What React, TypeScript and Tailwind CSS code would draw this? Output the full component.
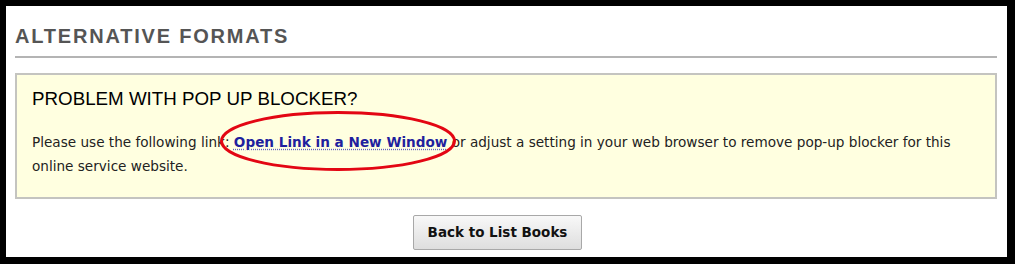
export default function App() {
  return (
    <div className="w-[1015px] h-[264px] bg-black pt-[6px] pl-[6px] pr-[8px] pb-[7px]">
      <div className="h-full bg-white pl-[9px] pr-[10px] pt-[18px]">
        <h2 className="font-['Liberation_Sans',Arial,sans-serif] font-bold text-[20px] leading-[24px] tracking-[1.8px] text-[#555] pb-[8px] border-b-2 border-[#b4b4b4]">
          ALTERNATIVE FORMATS
        </h2>
        <div className="relative mt-[15px] h-[126px] border-2 border-[#c4c4c0] bg-[#ffffe0] pl-[15px] pt-[13px]">
          <h3 className="font-['Liberation_Sans',Arial,sans-serif] text-[18.75px] leading-[22px] text-black">
            PROBLEM WITH POP UP BLOCKER?
          </h3>
          <p className="mt-[20px] font-['DejaVu_Sans',Verdana,sans-serif] text-[13.6px] leading-[24px] text-[#222]">
            Please use the following link:{' '}
            <a className="font-bold text-[#1f1f9e] underline decoration-dotted decoration-[#6060c0] underline-offset-2">
              Open Link in a New Window
            </a>{' '}
            or adjust a setting in your web browser to remove pop-up blocker for this
            <br />
            online service website.
          </p>
          <svg
            className="absolute left-[201px] top-[35px] pointer-events-none"
            width="240"
            height="62"
            viewBox="0 0 240 62"
          >
            <ellipse cx="120" cy="31" rx="116.5" ry="28.5" fill="none" stroke="#e30613" strokeWidth="3" />
          </svg>
        </div>
        <div className="flex justify-center pr-[17px] pt-[16px]">
          <button className="w-[169px] h-[35px] rounded-[2px] border border-[#a8a8a8] bg-gradient-to-b from-[#f8f8f8] to-[#dedede] font-['DejaVu_Sans',Verdana,sans-serif] font-bold text-[13.5px] text-[#111]">
            Back to List Books
          </button>
        </div>
      </div>
    </div>
  );
}
